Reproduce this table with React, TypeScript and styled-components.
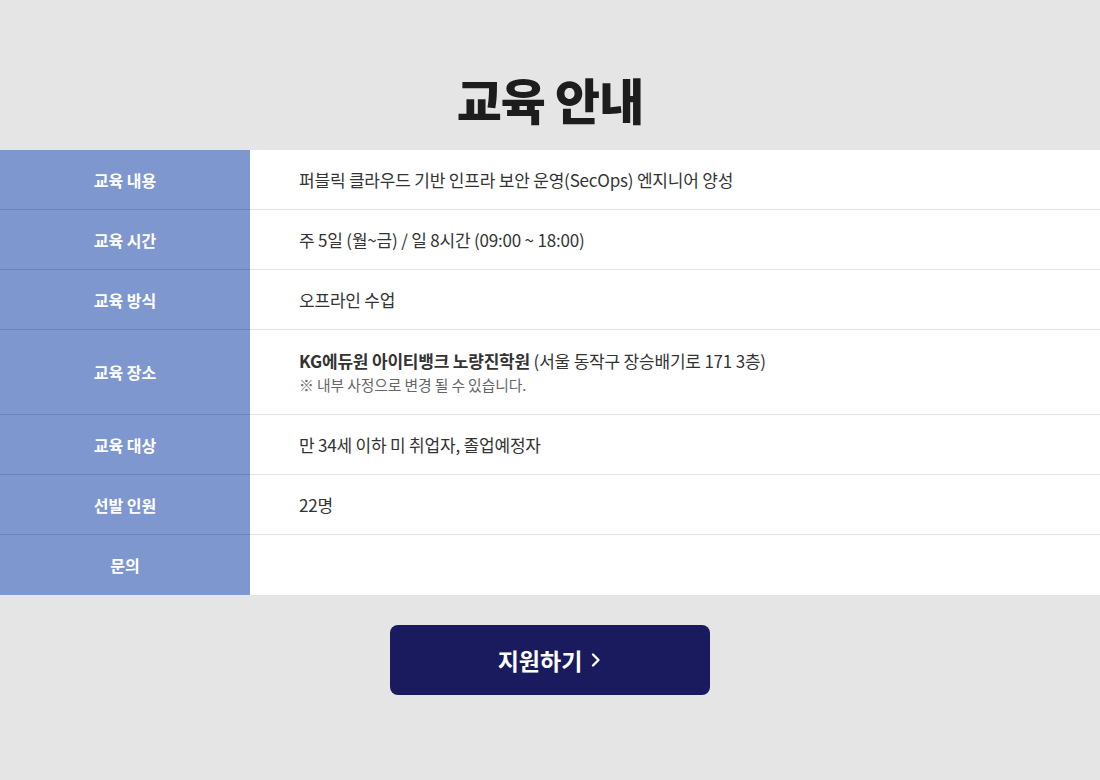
import React from "react";
import styled, { createGlobalStyle } from "styled-components";

const GlobalStyle = createGlobalStyle`
  body {
    margin: 0;
    background: #e5e5e5;
    font-family: "Noto Sans CJK KR", "Noto Sans", sans-serif;
  }
`;

const Page = styled.div`
  min-height: 780px;
  padding-top: 68px;
  display: flex;
  flex-direction: column;
  align-items: center;
  box-sizing: border-box;
`;

const Title = styled.h1`
  margin: 0 0 21px;
  height: 61px;
  line-height: 61px;
  font-size: 49px;
  font-weight: 900;
  color: #1d1d1d;
  letter-spacing: -1px;
`;

const Table = styled.div`
  width: 100%;
  display: flex;
  flex-direction: column;
`;

const Row = styled.div<{ $tall?: boolean }>`
  display: grid;
  grid-template-columns: 250px 1fr;
  height: ${(props) => (props.$tall ? "85px" : "60px")};
`;

const Label = styled.div<{ $last?: boolean }>`
  display: flex;
  align-items: center;
  justify-content: center;
  background: #7e98cf;
  color: #fff;
  font-size: 16px;
  font-weight: 700;
  border-bottom: ${(props) => (props.$last ? "none" : "1px solid #6a82b8")};
`;

const Content = styled.div<{ $last?: boolean }>`
  display: flex;
  flex-direction: column;
  justify-content: center;
  padding-left: 49px;
  background: #fff;
  color: #333;
  font-size: 17px;
  border-bottom: ${(props) => (props.$last ? "none" : "1px solid #e2e2e2")};
`;

const MainLine = styled.div`
  line-height: 26px;
  letter-spacing: -0.2px;
`;

const Strong = styled.b`
  font-weight: 700;
`;

const Note = styled.div`
  font-size: 14.8px;
  line-height: 22px;
  color: #666;
  letter-spacing: -0.1px;
`;

const ApplyButton = styled.button`
  margin-top: 30px;
  width: 320px;
  height: 70px;
  border: none;
  border-radius: 8px;
  background: #1a1b5e;
  color: #fff;
  font-family: inherit;
  font-size: 23px;
  font-weight: 700;
  display: flex;
  align-items: center;
  justify-content: center;
  gap: 8px;
  cursor: pointer;
`;

const rows: { label: string; content: React.ReactNode; tall?: boolean }[] = [
  {
    label: "교육 내용",
    content: <MainLine>퍼블릭 클라우드 기반 인프라 보안 운영(SecOps) 엔지니어 양성</MainLine>,
  },
  {
    label: "교육 시간",
    content: <MainLine>주 5일 (월~금) / 일 8시간 (09:00 ~ 18:00)</MainLine>,
  },
  { label: "교육 방식", content: <MainLine>오프라인 수업</MainLine> },
  {
    label: "교육 장소",
    tall: true,
    content: (
      <>
        <MainLine>
          <Strong>KG에듀원 아이티뱅크 노량진학원</Strong> (서울 동작구 장승배기로 171 3층)
        </MainLine>
        <Note>※ 내부 사정으로 변경 될 수 있습니다.</Note>
      </>
    ),
  },
  { label: "교육 대상", content: <MainLine>만 34세 이하 미 취업자, 졸업예정자</MainLine> },
  { label: "선발 인원", content: <MainLine>22명</MainLine> },
  { label: "문의", content: null },
];

export default function App() {
  return (
    <>
      <GlobalStyle />
      <Page>
        <Title>교육 안내</Title>
        <Table>
          {rows.map((row, i) => {
            const last = i === rows.length - 1;
            return (
              <Row key={row.label} $tall={row.tall}>
                <Label $last={last}>{row.label}</Label>
                <Content $last={last}>{row.content}</Content>
              </Row>
            );
          })}
        </Table>
        <ApplyButton>
          지원하기
          <svg width="12" height="18" viewBox="0 0 12 18" fill="none">
            <path d="M3 3.5l5.5 5.5-5.5 5.5" stroke="#fff" strokeWidth="2.4" strokeLinecap="round" strokeLinejoin="round" />
          </svg>
        </ApplyButton>
      </Page>
    </>
  );
}
